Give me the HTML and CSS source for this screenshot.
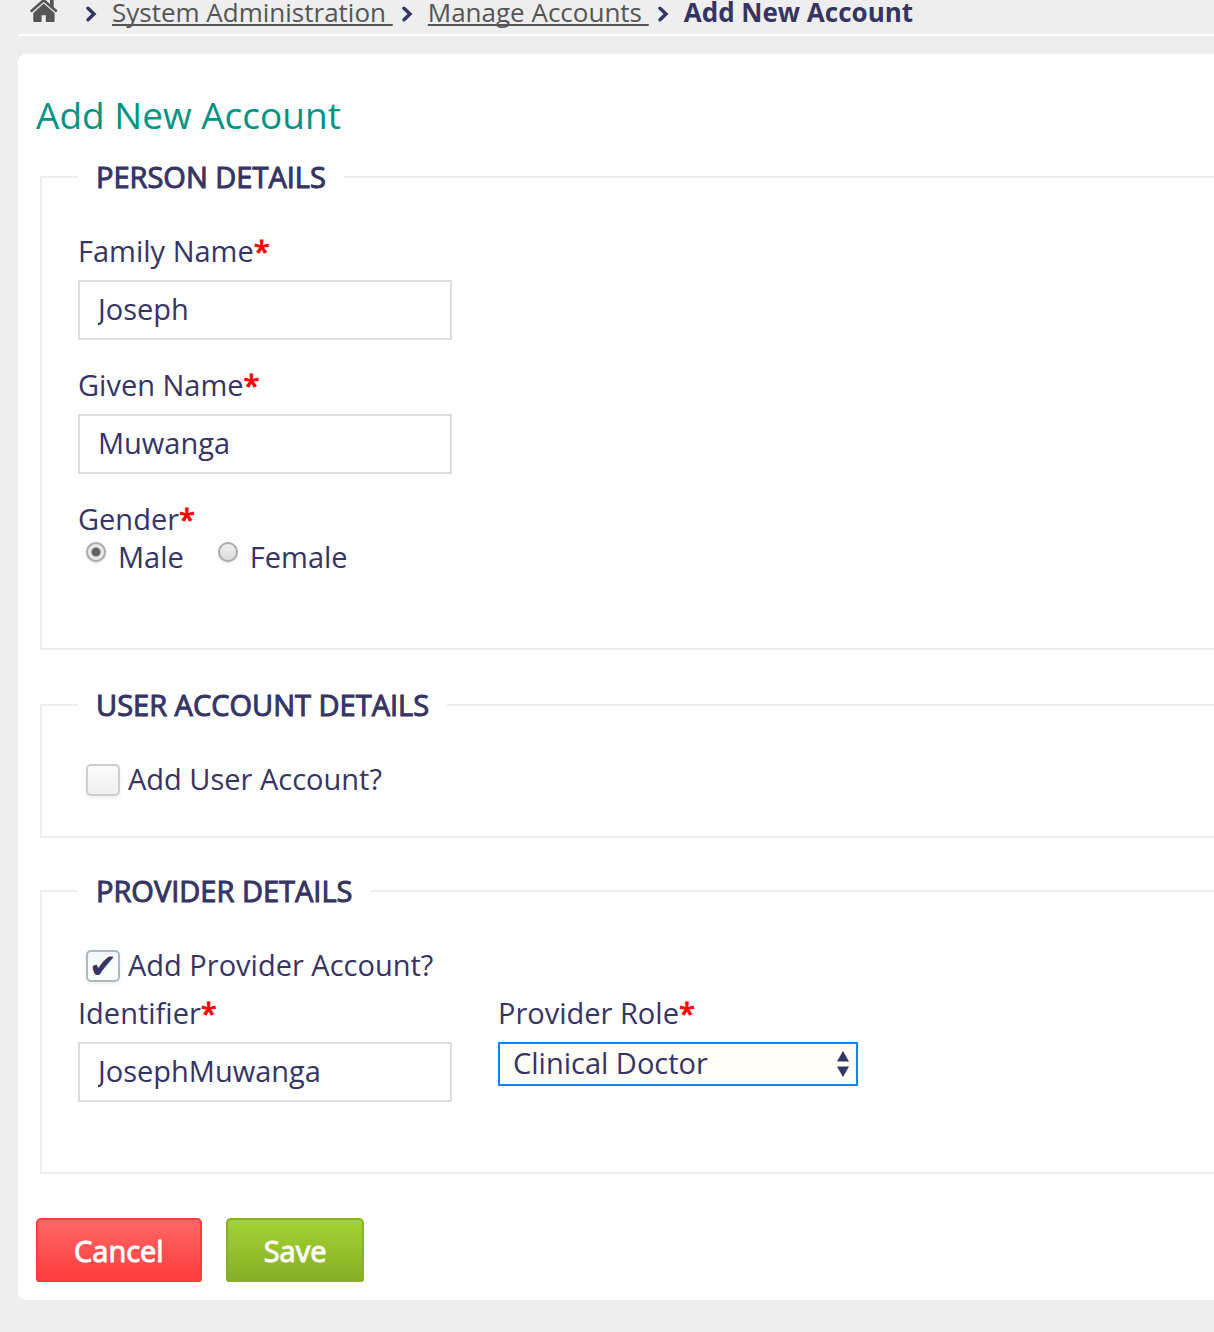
FILE: index.html
```
<!DOCTYPE html>
<html lang="en">
<head>
<meta charset="utf-8">
<title>Add New Account</title>
<link rel="stylesheet" href="styles.css">
</head>
<body>
<nav class="breadcrumbs" aria-label="Breadcrumb">
  <a class="home" href="#" aria-label="Home"><svg width="28" height="22" viewBox="0 0 28 22" aria-hidden="true"><path d="M.8 11.6 13.7 .2 26.8 11.600" fill="none" stroke="#555" stroke-width="2.6"/><path d="M20 0h3.700v8L20 5z" fill="#555"/><path d="M13.700 3.400 24.600 12.900V21q0 1-1 1H15.800V15.200H11.600V22H4.300q-1 0-1-1V12.900z" fill="#555"/></svg></a>
  <svg class="chevron" width="12" height="16" viewBox="0 0 12 16" aria-hidden="true"><path d="M3 2.200 9 8 3 13.800"/></svg>
  <a href="#">System Administration&nbsp;</a>
  <svg class="chevron" width="12" height="16" viewBox="0 0 12 16" aria-hidden="true"><path d="M3 2.200 9 8 3 13.800"/></svg>
  <a href="#">Manage Accounts&nbsp;</a>
  <svg class="chevron" width="12" height="16" viewBox="0 0 12 16" aria-hidden="true"><path d="M3 2.200 9 8 3 13.800"/></svg>
  <strong>Add New Account</strong>
</nav>
<main class="panel">
  <h1>Add New Account</h1>
  <form>
    <fieldset class="person">
      <legend>PERSON DETAILS</legend>
      <div class="field">
        <label for="family">Family Name<span class="required">*</span></label>
        <input class="text" id="family" type="text" value="Joseph">
      </div>
      <div class="field">
        <label for="given">Given Name<span class="required">*</span></label>
        <input class="text" id="given" type="text" value="Muwanga">
      </div>
      <div role="radiogroup" aria-labelledby="gender">
        <div id="gender">Gender<span class="required">*</span></div>
        <div class="radios">
          <label class="choice"><input class="radio" type="radio" name="gender" checked>Male</label>
          <label class="choice"><input class="radio" type="radio" name="gender">Female</label>
        </div>
      </div>
    </fieldset>
    <fieldset class="account">
      <legend>USER ACCOUNT DETAILS</legend>
      <label class="check"><input class="box" type="checkbox">Add User Account?</label>
    </fieldset>
    <fieldset class="provider">
      <legend>PROVIDER DETAILS</legend>
      <label class="check"><input class="box" type="checkbox" checked>Add Provider Account?</label>
      <div class="columns">
        <div>
          <label for="identifier">Identifier<span class="required">*</span></label>
          <input class="text" id="identifier" type="text" value="JosephMuwanga">
        </div>
        <div>
          <label for="role">Provider Role<span class="required">*</span></label>
          <div class="select">
            <select id="role"><option>Clinical Doctor</option></select>
            <svg class="arrows" width="14" height="26" viewBox="0 0 14 26" aria-hidden="true"><path d="M7 0 13 10.500H1zM7 26 1 15.500H13z"/></svg>
          </div>
        </div>
      </div>
    </fieldset>
    <div class="actions">
      <button class="cancel" type="button">Cancel</button>
      <button class="save" type="submit">Save</button>
    </div>
  </form>
</main>
</body>
</html>
```
FILE: styles.css
```
* {
  box-sizing: border-box;
}

body {
  margin: 0;
  padding: 0 0 32px 18px;
  background: #eee;
  color: #363463;
  font: 29px/38px "Open Sans", sans-serif;
}

.breadcrumbs {
  display: flex;
  padding: 0 0 10px 12px;
  border-bottom: 2px solid #fff;
  font-size: 26px;
  line-height: 24px;
  white-space: nowrap;
}

.breadcrumbs a {
  color: #555;
  text-decoration-thickness: 2px;
  text-underline-offset: 2px;
  text-decoration-skip-ink: none;
}

.home {
  width: 28px;
  margin-right: 19px;
}

.home svg {
  display: block;
}

.chevron {
  margin: 6px 15px 0 8px;
  fill: none;
  stroke: #363463;
  stroke-width: 3.4;
  stroke-linecap: round;
}

.panel {
  margin-top: 18px;
  padding: 35px 0 18px 18px;
  background: #fff;
  border-radius: 8px 0 0 8px;
}

h1 {
  margin: 0 0 17px;
  color: #009384;
  font-size: 37px;
  font-weight: 400;
  line-height: 52px;
}

fieldset {
  min-width: 0;
  margin: 0 0 36px 4px;
  padding: 36px 36px 38px;
  border: 2px solid #eee;
  border-right: 0;
}

.person {
  padding-bottom: 72px;
}

.account {
  margin-bottom: 34px;
}

.provider {
  margin-bottom: 44px;
  padding-bottom: 70px;
}

legend {
  padding: 0 18px;
  -webkit-text-stroke: 1px #363463;
}

label {
  display: block;
}

.required {
  color: #f00;
  -webkit-text-stroke: 1px #f00;
}

.field {
  margin-bottom: 26px;
}

.text {
  display: block;
  width: 374px;
  max-width: 100%;
  height: 60px;
  margin-top: 10px;
  padding: 0 18px 4px;
  border: 2px solid #ddd;
  background: #fff;
  color: inherit;
  font: inherit;
}

.radios {
  display: flex;
  gap: 34px;
  padding-left: 8px;
}

.choice {
  display: flex;
  gap: 12px;
}

.radio {
  appearance: none;
  width: 20px;
  height: 20px;
  margin: 4px 0 0;
  border: 2px solid #aaa;
  border-radius: 50%;
  background: linear-gradient(#eee, #ddd);
  box-shadow: 0 1px 2px #ddd;
}

.radio:checked {
  background: radial-gradient(circle, #606060 4px, #e6e6e6 5px);
}

.check {
  display: flex;
  gap: 8px;
  padding-left: 8px;
}

.box {
  display: grid;
  place-items: center;
  appearance: none;
  width: 34px;
  height: 32px;
  margin: 4px 0 0;
  border: 2px solid #cacece;
  border-radius: 5px;
  background: linear-gradient(#fafafa, #f0f0f0);
  box-shadow: 0 2px 4px #eee;
  color: inherit;
}

.box:checked {
  border-color: #adb8c0;
  background: linear-gradient(#f4f6f7, #fff);
}

.box:checked::before {
  content: "\2714";
  font: 34px/28px "DejaVu Sans", sans-serif;
}

.columns {
  display: flex;
  gap: 46px;
  margin-top: 10px;
}

.select {
  position: relative;
  width: 360px;
  margin-top: 10px;
}

select {
  appearance: none;
  display: block;
  width: 100%;
  height: 44px;
  padding: 0 13px 2px;
  border: 2px solid #0a84ff;
  border-radius: 0;
  background: #fffdf7;
  color: inherit;
  font: inherit;
}

.arrows {
  position: absolute;
  top: 9px;
  right: 8px;
  fill: #363463;
  pointer-events: none;
}

.actions {
  display: flex;
  gap: 24px;
}

button {
  height: 64px;
  padding: 2px 36px 0;
  border: 2px solid;
  border-radius: 5px 5px 3px 3px;
  color: #fff;
  font: inherit;
  -webkit-text-stroke: 1px #fff;
}

.cancel {
  border-color: #ff3d3d;
  background: linear-gradient(#ff6666, #ff3d3d);
}

.save {
  border-color: #88af28;
  background: linear-gradient(#a2d230, #88af28);
}
```
